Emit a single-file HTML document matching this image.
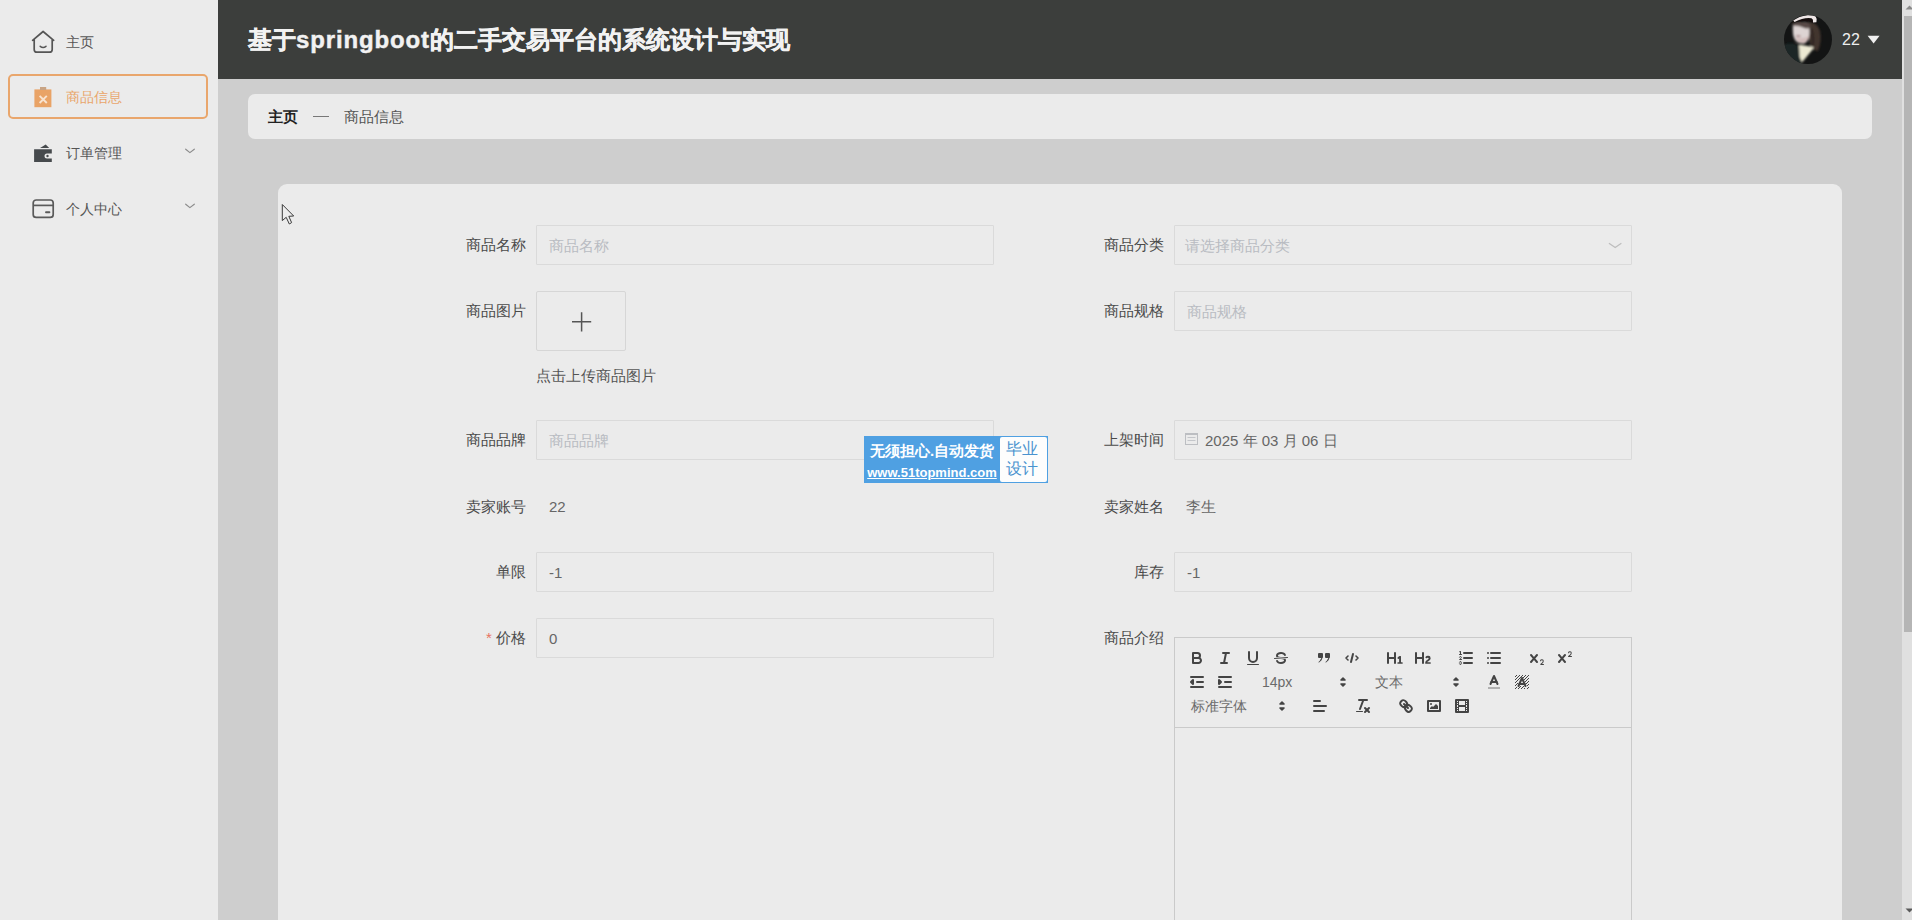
<!DOCTYPE html>
<html lang="zh">
<head>
<meta charset="utf-8">
<title>商品信息</title>
<style>
*{box-sizing:border-box;margin:0;padding:0}
html,body{width:1912px;height:920px;overflow:hidden}
body{font-family:"Liberation Sans",sans-serif;background:#cecece;color:#333;position:relative;font-size:15px}
.abs{position:absolute}
#side{left:0;top:0;width:218px;height:920px;background:#ebebeb}
#head{left:218px;top:0;width:1684px;height:79px;background:#3c3e3c}
#title{left:248px;top:0;height:79px;line-height:79px;color:#f2f2f2;font-size:24px;font-weight:bold;white-space:nowrap;letter-spacing:0}
#scroll{left:1902px;top:0;width:10px;height:920px;background:#e0e0e0}
#thumb{left:1904px;top:16px;width:8px;height:616px;background:#b5b5b5}
#crumb{left:248px;top:94px;width:1624px;height:45px;background:#ebebeb;border-radius:7px}
#card{left:278px;top:184px;width:1564px;height:760px;background:#ebebeb;border-radius:9px}
.mi{left:8px;width:200px;height:45px;border-radius:5px}
.mi .t{position:absolute;left:58px;top:0;line-height:45px;font-size:14px;color:#555;white-space:nowrap}
.mi.on{border:2px solid #e9a66c}
.mi.on .t{left:56px;top:-1px;color:#e9a66c}
.lab{text-align:right;font-size:15px;color:#4a4a4a;line-height:40px;height:40px;white-space:nowrap}
.inp{height:40px;border:1px solid #dadada;border-radius:1px;font-size:15px;line-height:40px;padding-left:12px;color:#666;white-space:nowrap}
.ph{color:#b9bcc2}
.val{font-size:15px;color:#666;line-height:40px;white-space:nowrap}

#title{-webkit-text-stroke:.45px #f2f2f2}
#title span{letter-spacing:.85px}
svg{display:block;overflow:hidden}
.ic{position:absolute}
/* quill */
#qtb{padding:8px;}
.qf{float:left;margin-right:15px;height:24px}
.qb{float:left;width:28px;height:24px;padding:3px 5px}
.qb svg{width:18px;height:18px}
.qs{stroke:#444;stroke-width:2;stroke-linecap:round;stroke-linejoin:round;fill:none}
.qfl{fill:#444}
.qth{stroke-width:1}
.qp{float:left;position:relative;height:24px;font-size:14px;color:#6a6a6a;line-height:24px;padding-left:8px;white-space:nowrap}
.qp svg{position:absolute;right:0;top:3px;width:18px;height:18px}
.qp .qs{stroke-width:1.6}
</style>
</head>
<body>
<div id="side" class="abs"></div>
<div id="head" class="abs"></div>
<div id="title" class="abs">基于<span>springboot</span>的二手交易平台的系统设计与实现</div>
<div id="scroll" class="abs"></div>
<div id="thumb" class="abs"></div>
<div id="crumb" class="abs"></div>
<div id="card" class="abs"></div>

<!-- sidebar -->
<div class="abs mi" style="top:20px"><span class="t">主页</span></div>
<div class="abs mi on" style="top:74px"><span class="t">商品信息</span></div>
<div class="abs mi" style="top:130.5px"><span class="t">订单管理</span></div>
<div class="abs mi" style="top:186.5px"><span class="t">个人中心</span></div>

<!-- breadcrumb -->
<div class="abs" style="left:268px;top:94px;line-height:45px;font-size:15px;font-weight:bold;color:#222">主页</div>
<div class="abs" style="left:313px;top:116px;width:16px;height:1px;background:#777"></div>
<div class="abs" style="left:344px;top:94px;line-height:45px;font-size:15px;color:#555">商品信息</div>

<!-- user -->
<div class="abs" style="left:1842px;top:0;line-height:80px;font-size:16px;color:#eee">22</div>

<!-- form left -->
<div class="abs lab" style="left:326px;width:200px;top:225px">商品名称</div>
<div class="abs inp" style="left:536px;top:225px;width:458px"><span class="ph">商品名称</span></div>
<div class="abs lab" style="left:326px;width:200px;top:291px">商品图片</div>
<div class="abs" style="left:536px;top:291px;width:90px;height:60px;border:1px solid #d6d6d6;border-radius:2px"></div>
<div class="abs val" style="left:536px;top:356px;color:#555">点击上传商品图片</div>
<div class="abs lab" style="left:326px;width:200px;top:420px">商品品牌</div>
<div class="abs inp" style="left:536px;top:420px;width:458px"><span class="ph">商品品牌</span></div>
<div class="abs lab" style="left:326px;width:200px;top:487px">卖家账号</div>
<div class="abs val" style="left:549px;top:487px">22</div>
<div class="abs lab" style="left:326px;width:200px;top:552px">单限</div>
<div class="abs inp" style="left:536px;top:552px;width:458px">-1</div>
<div class="abs lab" style="left:326px;width:200px;top:618px"><span style="color:#e8735f">* </span>价格</div>
<div class="abs inp" style="left:536px;top:618px;width:458px">0</div>

<!-- form right -->
<div class="abs lab" style="left:964px;width:200px;top:225px">商品分类</div>
<div class="abs inp" style="left:1174px;top:225px;width:458px;padding-left:10px"><span class="ph">请选择商品分类</span></div>
<div class="abs lab" style="left:964px;width:200px;top:291px">商品规格</div>
<div class="abs inp" style="left:1174px;top:291px;width:458px"><span class="ph">商品规格</span></div>
<div class="abs lab" style="left:964px;width:200px;top:420px">上架时间</div>
<div class="abs inp" style="left:1174px;top:420px;width:458px;padding-left:30px;line-height:39px">2025 年 03 月 06 日</div>
<div class="abs lab" style="left:964px;width:200px;top:487px">卖家姓名</div>
<div class="abs val" style="left:1186px;top:487px">李生</div>
<div class="abs lab" style="left:964px;width:200px;top:552px">库存</div>
<div class="abs inp" style="left:1174px;top:552px;width:458px">-1</div>
<div class="abs lab" style="left:964px;width:200px;top:618px">商品介绍</div>
<div class="abs" id="qtb" style="left:1174px;top:637px;width:458px;height:91px;border:1px solid #cacaca"><span class="qf"><span class="qb"><svg viewBox="0 0 18 18"><path class="qs" d="M5,4H9.5A2.5,2.5,0,0,1,12,6.5v0A2.5,2.5,0,0,1,9.5,9H5A0,0,0,0,1,5,9V4A0,0,0,0,1,5,4Z"/><path class="qs" d="M5,9h5.5A2.5,2.5,0,0,1,13,11.5v0A2.5,2.5,0,0,1,10.5,14H5a0,0,0,0,1,0,0V9A0,0,0,0,1,5,9Z"/></svg></span><span class="qb"><svg viewBox="0 0 18 18"><line class="qs" x1="7" x2="13" y1="4" y2="4"/><line class="qs" x1="5" x2="11" y1="14" y2="14"/><line class="qs" x1="8" x2="10" y1="14" y2="4"/></svg></span><span class="qb"><svg viewBox="0 0 18 18"><path class="qs" d="M5,3V9a4.012,4.012,0,0,0,4,4H9a4.012,4.012,0,0,0,4-4V3"/><rect class="qfl" height="1" rx="0.5" ry="0.5" width="12" x="3" y="15"/></svg></span><span class="qb"><svg viewBox="0 0 18 18"><line class="qs qth" x1="15.5" x2="2.5" y1="8.5" y2="9.5"/><path class="qfl" d="M9.007,8C6.542,7.791,6,7.519,6,6.5,6,5.792,7.283,5,9,5c1.571,0,2.765.679,2.969,1.309a1,1,0,0,0,1.9-.617C13.356,4.106,11.354,3,9,3,6.2,3,4,4.538,4,6.5a3.2,3.2,0,0,0,.5,1.843Z"/><path class="qfl" d="M8.984,10C11.457,10.208,12,10.479,12,11.5c0,0.708-1.283,1.5-3,1.5-1.571,0-2.765-.679-2.969-1.309a1,1,0,1,0-1.9.617C4.644,13.894,6.646,15,9,15c2.8,0,5-1.538,5-3.5a3.2,3.2,0,0,0-.5-1.843Z"/></svg></span></span><span class="qf"><span class="qb"><svg viewBox="0 0 18 18"><rect class="qfl qs" height="3" width="3" x="4" y="5"/><rect class="qfl qs" height="3" width="3" x="11" y="5"/><path class="qfl qs" style="stroke-width:1" d="M7,8c0,4.031-3,5-3,5"/><path class="qfl qs" style="stroke-width:1" d="M14,8c0,4.031-3,5-3,5"/></svg></span><span class="qb"><svg viewBox="0 0 18 18"><polyline class="qs" style="stroke-width:1.6" points="5 7 3 9 5 11"/><polyline class="qs" style="stroke-width:1.6" points="13 7 15 9 13 11"/><line class="qs" x1="10" x2="8" y1="5" y2="13"/></svg></span></span><span class="qf"><span class="qb"><svg viewBox="0 0 18 18"><path class="qfl" d="M10,4V14a1,1,0,0,1-2,0V10H3v4a1,1,0,0,1-2,0V4A1,1,0,0,1,3,4V8H8V4a1,1,0,0,1,2,0Zm6.06787,9.209H14.98975V7.59863a.54085.54085,0,0,0-.605-.60547h-.62744a1.01119,1.01119,0,0,0-.748.29688L11.645,8.56641a.5435.5435,0,0,0-.022.8584l.28613.30762a.53861.53861,0,0,0,.84717.0332l.09912-.08789a1.2137,1.2137,0,0,0,.2417-.35254h.02246s-.01123.30859-.01123.60547V13.209H12.041a.54085.54085,0,0,0-.605.60547v.43945a.54085.54085,0,0,0,.605.60547h4.02686a.54085.54085,0,0,0,.605-.60547v-.43945A.54085.54085,0,0,0,16.06787,13.209Z"/></svg></span><span class="qb"><svg viewBox="0 0 18 18"><path class="qfl" d="M16.73975,13.81445v.43945a.54085.54085,0,0,1-.605.60547H11.855a.58392.58392,0,0,1-.64893-.60547V14.0127c0-2.90527,3.39941-3.42187,3.39941-4.55469a.77675.77675,0,0,0-.84717-.78125,1.17684,1.17684,0,0,0-.83594.38477c-.2749.26367-.561.374-.85791.13184l-.4292-.34082c-.30811-.24219-.38525-.51758-.1543-.81445a2.97155,2.97155,0,0,1,2.45361-1.17676,2.45393,2.45393,0,0,1,2.68408,2.40918c0,2.45312-3.1792,2.92676-3.27832,3.93848h2.79443A.54085.54085,0,0,1,16.73975,13.81445ZM9,3A.99974.99974,0,0,0,8,4V8H3V4A1,1,0,0,0,1,4V14a1,1,0,0,0,2,0V10H8v4a1,1,0,0,0,2,0V4A.99974.99974,0,0,0,9,3Z"/></svg></span></span><span class="qf"><span class="qb"><svg viewBox="0 0 18 18"><line class="qs" x1="7" x2="15" y1="4" y2="4"/><line class="qs" x1="7" x2="15" y1="9" y2="9"/><line class="qs" x1="7" x2="15" y1="14" y2="14"/><line class="qs qth" x1="2.5" x2="4.5" y1="5.5" y2="5.5"/><path class="qfl" d="M3.5,6A0.5,0.5,0,0,1,3,5.5V3.085l-0.276.138A0.5,0.5,0,0,1,2.053,3c-0.124-.247-0.023-0.324.224-0.447l1-.5A0.5,0.5,0,0,1,4,2.5v3A0.5,0.5,0,0,1,3.5,6Z"/><path class="qs qth" d="M4.5,10.5h-2c0-.234,1.85-1.076,1.85-2.234A0.959,0.959,0,0,0,2.5,8.156"/><path class="qs qth" d="M2.5,14.846a0.959,0.959,0,0,0,1.85-.109A0.7,0.7,0,0,0,3.75,14a0.688,0.688,0,0,0,.6-0.736,0.959,0.959,0,0,0-1.85-.109"/></svg></span><span class="qb"><svg viewBox="0 0 18 18"><line class="qs" x1="6" x2="15" y1="4" y2="4"/><line class="qs" x1="6" x2="15" y1="9" y2="9"/><line class="qs" x1="6" x2="15" y1="14" y2="14"/><line class="qs" x1="3" x2="3" y1="4" y2="4"/><line class="qs" x1="3" x2="3" y1="9" y2="9"/><line class="qs" x1="3" x2="3" y1="14" y2="14"/></svg></span></span><span class="qf"><span class="qb"><svg viewBox="0 0 18 18"><path class="qfl" d="M15.5,15H13.861a3.858,3.858,0,0,0,1.914-2.975,1.8,1.8,0,0,0-1.6-1.751A1.921,1.921,0,0,0,12.021,11.7a0.5,0.5,0,1,0,.957.291h0a0.914,0.914,0,0,1,1.053-.725,0.81,0.81,0,0,1,.744.762c0,1.076-1.169,1.86-1.735,2.449A1,1,0,0,0,12.5,16h3A0.5,0.5,0,0,0,15.5,15Z"/><path class="qfl" d="M9.65,5.241a1,1,0,0,0-1.409.108L6,7.964,3.759,5.349A1,1,0,0,0,2.192,6.59178,1,1,0,0,0,2.241,6.651L4.683,9.5,2.241,12.35A1,1,0,0,0,3.71,13.7q0.026-.024.049-0.049L6,11.036,8.241,13.65a1,1,0,1,0,1.567-1.241,1,1,0,0,0-.049-0.06L7.317,9.5,9.759,6.651A1,1,0,0,0,9.65,5.241Z"/></svg></span><span class="qb"><svg viewBox="0 0 18 18"><path class="qfl" d="M15.5,7H13.861a4.015,4.015,0,0,0,1.914-2.975,1.8,1.8,0,0,0-1.6-1.751A1.922,1.922,0,0,0,12.021,3.7a0.5,0.5,0,1,0,.957.291,0.917,0.917,0,0,1,1.053-.725,0.81,0.81,0,0,1,.744.762c0,1.077-1.164,1.925-1.934,2.486A1.423,1.423,0,0,0,12,7.5a0.5,0.5,0,0,0,.5.5h3A0.5,0.5,0,0,0,15.5,7Z"/><path class="qfl" d="M9.651,5.241a1,1,0,0,0-1.41.108L6,7.964,3.759,5.349a1,1,0,1,0-1.519,1.3L4.683,9.5,2.241,12.35a1,1,0,1,0,1.519,1.3L6,11.036,8.241,13.65a1,1,0,0,0,1.519-1.3L7.317,9.5,9.759,6.651A1,1,0,0,0,9.651,5.241Z"/></svg></span></span><span class="qf"><span class="qb"><svg viewBox="0 0 18 18"><line class="qs" x1="3" x2="15" y1="14" y2="14"/><line class="qs" x1="3" x2="15" y1="4" y2="4"/><line class="qs" x1="9" x2="15" y1="9" y2="9"/><polyline class="qs" points="5 7 5 11 3 9 5 7"/></svg></span><span class="qb"><svg viewBox="0 0 18 18"><line class="qs" x1="3" x2="15" y1="14" y2="14"/><line class="qs" x1="3" x2="15" y1="4" y2="4"/><line class="qs" x1="9" x2="15" y1="9" y2="9"/><polyline class="qfl qs" points="3 7 3 11 5 9 3 7"/></svg></span></span><span class="qf"><span class="qp" style="width:98px">14px<svg viewBox="0 0 18 18"><polygon class="qs" style="fill:#444" points="7 11 9 13 11 11 7 11"/><polygon class="qs" style="fill:#444" points="7 7 9 5 11 7 7 7"/></svg></span></span><span class="qf"><span class="qp" style="width:98px">文本<svg viewBox="0 0 18 18"><polygon class="qs" style="fill:#444" points="7 11 9 13 11 11 7 11"/><polygon class="qs" style="fill:#444" points="7 7 9 5 11 7 7 7"/></svg></span></span><span class="qf"><span class="qb"><svg viewBox="0 0 18 18"><line x1="3" x2="15" y1="15" y2="15" stroke="#777" stroke-width="1"/><polyline class="qs" points="5.5 11 9 3 12.5 11"/><line class="qs" x1="11.63" x2="6.38" y1="9" y2="9"/></svg></span><span class="qb"><svg viewBox="0 0 18 18"><g class="qfl"><rect x="4" y="4" width="1" height="1"/><rect x="2" y="6" width="1" height="1"/><rect x="3" y="5" width="1" height="1"/><rect x="4" y="7" width="1" height="1"/><rect x="2" y="12" width="1" height="1"/><rect x="2" y="9" width="1" height="1"/><rect x="2" y="15" width="1" height="1"/><rect x="3" y="8" width="1" height="1"/><rect x="12" y="2" width="1" height="1"/><rect x="11" y="3" width="1" height="1"/><rect x="2" y="3" width="1" height="1"/><rect x="6" y="2" width="1" height="1"/><rect x="3" y="2" width="1" height="1"/><rect x="5" y="3" width="1" height="1"/><rect x="9" y="2" width="1" height="1"/><rect x="15" y="14" width="1" height="1"/><rect x="13" y="7" width="1" height="1"/><rect x="15" y="5" width="1" height="1"/><rect x="14" y="6" width="1" height="1"/><rect x="15" y="8" width="1" height="1"/><rect x="14" y="9" width="1" height="1"/><rect x="14" y="3" width="1" height="1"/><rect x="15" y="2" width="1" height="1"/><rect x="12" y="5" width="1" height="1"/><rect x="13" y="4" width="1" height="1"/><rect x="9" y="14" width="1" height="1"/><rect x="8" y="15" width="1" height="1"/><rect x="5" y="15" width="1" height="1"/><rect x="11" y="15" width="1" height="1"/><rect x="14" y="15" width="1" height="1"/><rect x="15" y="11" width="1" height="1"/><rect x="5" y="6" width="1" height="1"/><rect x="6" y="5" width="1" height="1"/><rect x="3" y="11" width="1" height="1"/><rect x="4" y="10" width="1" height="1"/><rect x="3" y="14" width="1" height="1"/><rect x="6" y="14" width="1" height="1"/><rect x="10" y="13" width="1" height="1"/><rect x="14" y="12" width="1" height="1"/><rect x="13" y="10" width="1" height="1"/><rect x="12" y="8" width="1" height="1"/><rect x="7" y="13" width="1" height="1"/><rect x="8" y="3" width="1" height="1"/><rect x="7" y="4" width="1" height="1"/><rect x="10" y="4" width="1" height="1"/><rect x="11" y="6" width="1" height="1"/></g><polyline class="qs" points="5.5 13 9 5 12.5 13"/><line class="qs" x1="11.63" x2="6.38" y1="11" y2="11"/></svg></span></span><span class="qf"><span class="qp" style="width:108px">标准字体<svg viewBox="0 0 18 18"><polygon class="qs" style="fill:#444" points="7 11 9 13 11 11 7 11"/><polygon class="qs" style="fill:#444" points="7 7 9 5 11 7 7 7"/></svg></span></span><span class="qf"><span class="qb"><svg viewBox="0 0 18 18"><line class="qs" x1="3" x2="15" y1="9" y2="9"/><line class="qs" x1="3" x2="13" y1="14" y2="14"/><line class="qs" x1="3" x2="9" y1="4" y2="4"/></svg></span></span><span class="qf"><span class="qb"><svg viewBox="0 0 18 18"><line class="qs" x1="5" x2="13" y1="3" y2="3"/><line class="qs" x1="6" x2="9.35" y1="12" y2="3"/><line class="qs" x1="11" x2="15" y1="11" y2="15"/><line class="qs" x1="15" x2="11" y1="11" y2="15"/><rect class="qfl" height="1" rx="0.5" ry="0.5" width="7" x="2" y="14"/></svg></span></span><span class="qf"><span class="qb"><svg viewBox="0 0 18 18"><line class="qs" x1="7" x2="11" y1="7" y2="11"/><path class="qs" d="M8.9,4.577a3.476,3.476,0,0,1,.36,4.679A3.476,3.476,0,0,1,4.577,8.9C3.185,7.5,2.035,6.4,4.217,4.217S7.5,3.185,8.9,4.577Z"/><path class="qs" d="M13.423,9.1a3.476,3.476,0,0,0-4.679-.36,3.476,3.476,0,0,0,.36,4.679c1.392,1.392,2.5,2.542,4.679.36S14.815,10.5,13.423,9.1Z"/></svg></span><span class="qb"><svg viewBox="0 0 18 18"><rect class="qs" height="10" width="12" x="3" y="4"/><circle class="qfl" cx="6" cy="7" r="1"/><polyline class="qfl" points="5 12 5 11 7 9 8 10 11 7 13 9 13 12 5 12"/></svg></span><span class="qb"><svg viewBox="0 0 18 18"><rect class="qs" height="12" width="12" x="3" y="3"/><rect class="qfl" height="12" width="1" x="5" y="3"/><rect class="qfl" height="12" width="1" x="12" y="3"/><rect class="qfl" height="2" width="8" x="5" y="8"/><rect class="qfl" height="1" width="3" x="3" y="5"/><rect class="qfl" height="1" width="3" x="3" y="7"/><rect class="qfl" height="1" width="3" x="3" y="10"/><rect class="qfl" height="1" width="3" x="3" y="12"/><rect class="qfl" height="1" width="3" x="12" y="5"/><rect class="qfl" height="1" width="3" x="12" y="7"/><rect class="qfl" height="1" width="3" x="12" y="10"/><rect class="qfl" height="1" width="3" x="12" y="12"/></svg></span></span></div>
<div class="abs" id="qed" style="left:1174px;top:727px;width:458px;height:210px;border:1px solid #cacaca"></div>

<!-- sidebar icons -->
<svg class="ic" style="left:28px;top:27px" width="30" height="30" viewBox="0 0 30 30"><path d="M4.6 13.3 L15.1 4.5 L25.7 13.3 M6.2 12 V22.4 Q6.2 25.2 9 25.2 H21.4 Q24.2 25.2 24.2 22.4 V12" fill="none" stroke="#555" stroke-width="1.7" stroke-linecap="round" stroke-linejoin="round"/><path d="M12.2 19.3 Q15.1 21.6 18 19.3" fill="none" stroke="#555" stroke-width="1.5" stroke-linecap="round"/></svg>
<svg class="ic" style="left:28px;top:82px" width="30" height="30" viewBox="0 0 30 30"><rect x="6.4" y="7.4" width="17" height="17.8" fill="#e9a366"/><rect x="12" y="5" width="6.2" height="3" fill="#c9a484"/><path d="M11.6 13.8 L18.8 21 M18.8 13.8 L11.6 21" stroke="#f8e3d0" stroke-width="1.9" fill="none"/></svg>
<svg class="ic" style="left:28px;top:137px" width="30" height="30" viewBox="0 0 30 30"><path d="M6.1 12.3 H23.8 V16.5 H19 A2.5 2.5 0 0 0 19 21.5 H23.8 V25 H6.1 Z" fill="#464a4d"/><path d="M12.1 10.9 L17.7 7.6 L21.2 10.9 Z" fill="#464a4d"/><circle cx="19.5" cy="19" r="1.2" fill="#464a4d"/></svg>
<svg class="ic" style="left:28px;top:193px" width="30" height="30" viewBox="0 0 30 30"><rect x="5.2" y="7" width="20" height="17.4" rx="3" ry="3" fill="none" stroke="#5a5a5a" stroke-width="1.7"/><path d="M5.2 12.4 H25.2" stroke="#5a5a5a" stroke-width="1.7"/><rect x="17.1" y="18.3" width="5.2" height="1.9" rx=".8" fill="#5a5a5a"/></svg>
<svg class="ic" style="left:180px;top:142px" width="20" height="20" viewBox="0 0 20 20"><path d="M5.7 7.2 L9.9 10.6 L14.3 7.2" fill="none" stroke="#8c8c8c" stroke-width="1.2" stroke-linecap="round" stroke-linejoin="round"/></svg>
<svg class="ic" style="left:180px;top:197px" width="20" height="20" viewBox="0 0 20 20"><path d="M5.7 7.2 L9.9 10.6 L14.3 7.2" fill="none" stroke="#8c8c8c" stroke-width="1.2" stroke-linecap="round" stroke-linejoin="round"/></svg>

<!-- avatar -->
<svg class="ic" style="left:1784px;top:15px" width="48" height="49" viewBox="0 0 48 49">
<defs><clipPath id="avc"><ellipse cx="24" cy="24.5" rx="24" ry="24.5"/></clipPath><filter id="bl" x="-30%" y="-30%" width="160%" height="160%"><feGaussianBlur stdDeviation="1.1"/></filter><filter id="bl2" x="-30%" y="-30%" width="160%" height="160%"><feGaussianBlur stdDeviation="0.6"/></filter></defs>
<g clip-path="url(#avc)">
<rect width="48" height="49" fill="#131414"/>
<g filter="url(#bl)">
<path d="M-2 30 Q6 27 15 30 L18 50 L-2 50Z" fill="#1d2725"/>
<path d="M22 7 Q33 6 36 16 Q38 26 34 36 L27 34 Q24 20 22 7Z" fill="#43362f"/>
<path d="M9 9 Q8 20 11 25 Q14 29 20 28.5 Q25 27 25.5 18 Q26 10 22 7.5 Q14 6 9 9Z" fill="#ddd4d3"/>
<path d="M11 22 Q14 29 20 28.5 Q24 27 25 21 Q18 25 11 22Z" fill="#d2bcba"/>
<path d="M8.5 11 Q14 10 19 12.5 Q22 14 26 13 L26 9 Q18 5 8.5 8Z" fill="#584a46"/>
<path d="M12.5 20.6 Q14.5 21.6 16.5 20.8" stroke="#9a6f72" stroke-width="1.3" fill="none"/>
<path d="M15 29.6 L29.6 32 L28.2 35.1 L18.1 47.3 L15.7 42.1Z" fill="#ece9d3"/>
<path d="M27 14 Q30 22 28.5 31" stroke="#2c2320" stroke-width="2.2" fill="none"/>
</g>
<g filter="url(#bl2)">
<path d="M8 7.5 Q16 1 26 3.4 Q31 5 33 8.5 L29 7.6 Q22 4.5 13 7Z" fill="#161110"/>
<path d="M9.2 5.6 Q15 1.2 23.3 0.2 Q29 0 31.6 1.4 Q33.6 4 32.4 7.2 L29 7.4 Q29.6 4.4 27.5 3.3 Q20 2.2 10.6 7Z" fill="#efe7e7"/>
</g>
</g></svg>
<svg class="ic" style="left:1867px;top:35px" width="14" height="9" viewBox="0 0 14 9"><path d="M0.6 0.8 H12.6 L6.6 8.4Z" fill="#f0f0f0"/></svg>

<!-- form icons -->
<svg class="ic" style="left:571px;top:311px" width="22" height="22" viewBox="0 0 22 22"><path d="M1 10.8 H20.2 M10.6 1.2 V20.4" stroke="#555" stroke-width="1.5" fill="none"/></svg>
<svg class="ic" style="left:1605px;top:237px" width="20" height="16" viewBox="0 0 20 16"><path d="M4.3 6.5 L10.2 10.6 L16 6.5" fill="none" stroke="#bdbdbd" stroke-width="1.2" stroke-linecap="round" stroke-linejoin="round"/></svg>
<svg class="ic" style="left:1184px;top:432px" width="16" height="14" viewBox="0 0 16 14"><rect x="1.5" y="1.5" width="12" height="11" fill="none" stroke="#bcbec2" stroke-width="1"/><path d="M1.5 2.2 H13.5" stroke="#bcbec2" stroke-width="1.6"/><path d="M3.5 5.5 H11.5 M3.5 8.5 H11.5" stroke="#c4c6ca" stroke-width="1"/></svg>

<!-- watermark -->
<div class="abs" style="left:864px;top:436px;width:184px;height:47px;background:#4fa0e2"></div>
<div class="abs" style="left:1000px;top:437px;width:47px;height:45px;background:#fdfdfd;border-radius:2px"></div>
<div class="abs" style="left:864px;top:440px;width:136px;text-align:center;font-size:15px;font-weight:bold;color:#fff;line-height:22px;white-space:nowrap">无须担心.自动发货</div>
<div class="abs" style="left:864px;top:462px;width:136px;text-align:center;font-size:13px;font-weight:bold;color:#fff;line-height:22px;white-space:nowrap;text-decoration:underline">www.51topmind.com</div>
<div class="abs" style="left:998.5px;top:439px;width:47px;text-align:center;font-size:16px;color:#4a93cf;line-height:20px;white-space:nowrap">毕业<br>设计</div>

<svg class="ic" style="left:1902px;top:4px" width="10" height="8" viewBox="0 0 10 8"><path d="M3.5 5.5 L7.5 1.5 L11.5 5.5Z" fill="#8a8a8a"/></svg>
<svg class="ic" style="left:1902px;top:906px" width="10" height="8" viewBox="0 0 10 8"><path d="M3.5 2.5 L7.5 6.5 L11.5 2.5Z" fill="#5a5a5a"/></svg>
<!-- cursor -->
<svg class="ic" style="left:281px;top:203px" width="16" height="24" viewBox="0 0 16 24"><path d="M1.3 1.5 V17.6 L5.2 14.3 L8.3 21 L10.6 19.6 L7.8 13.3 L12.7 13 Z" fill="#ededed" stroke="#3a3a3a" stroke-width="1" stroke-linejoin="round"/></svg>

</body>
</html>
